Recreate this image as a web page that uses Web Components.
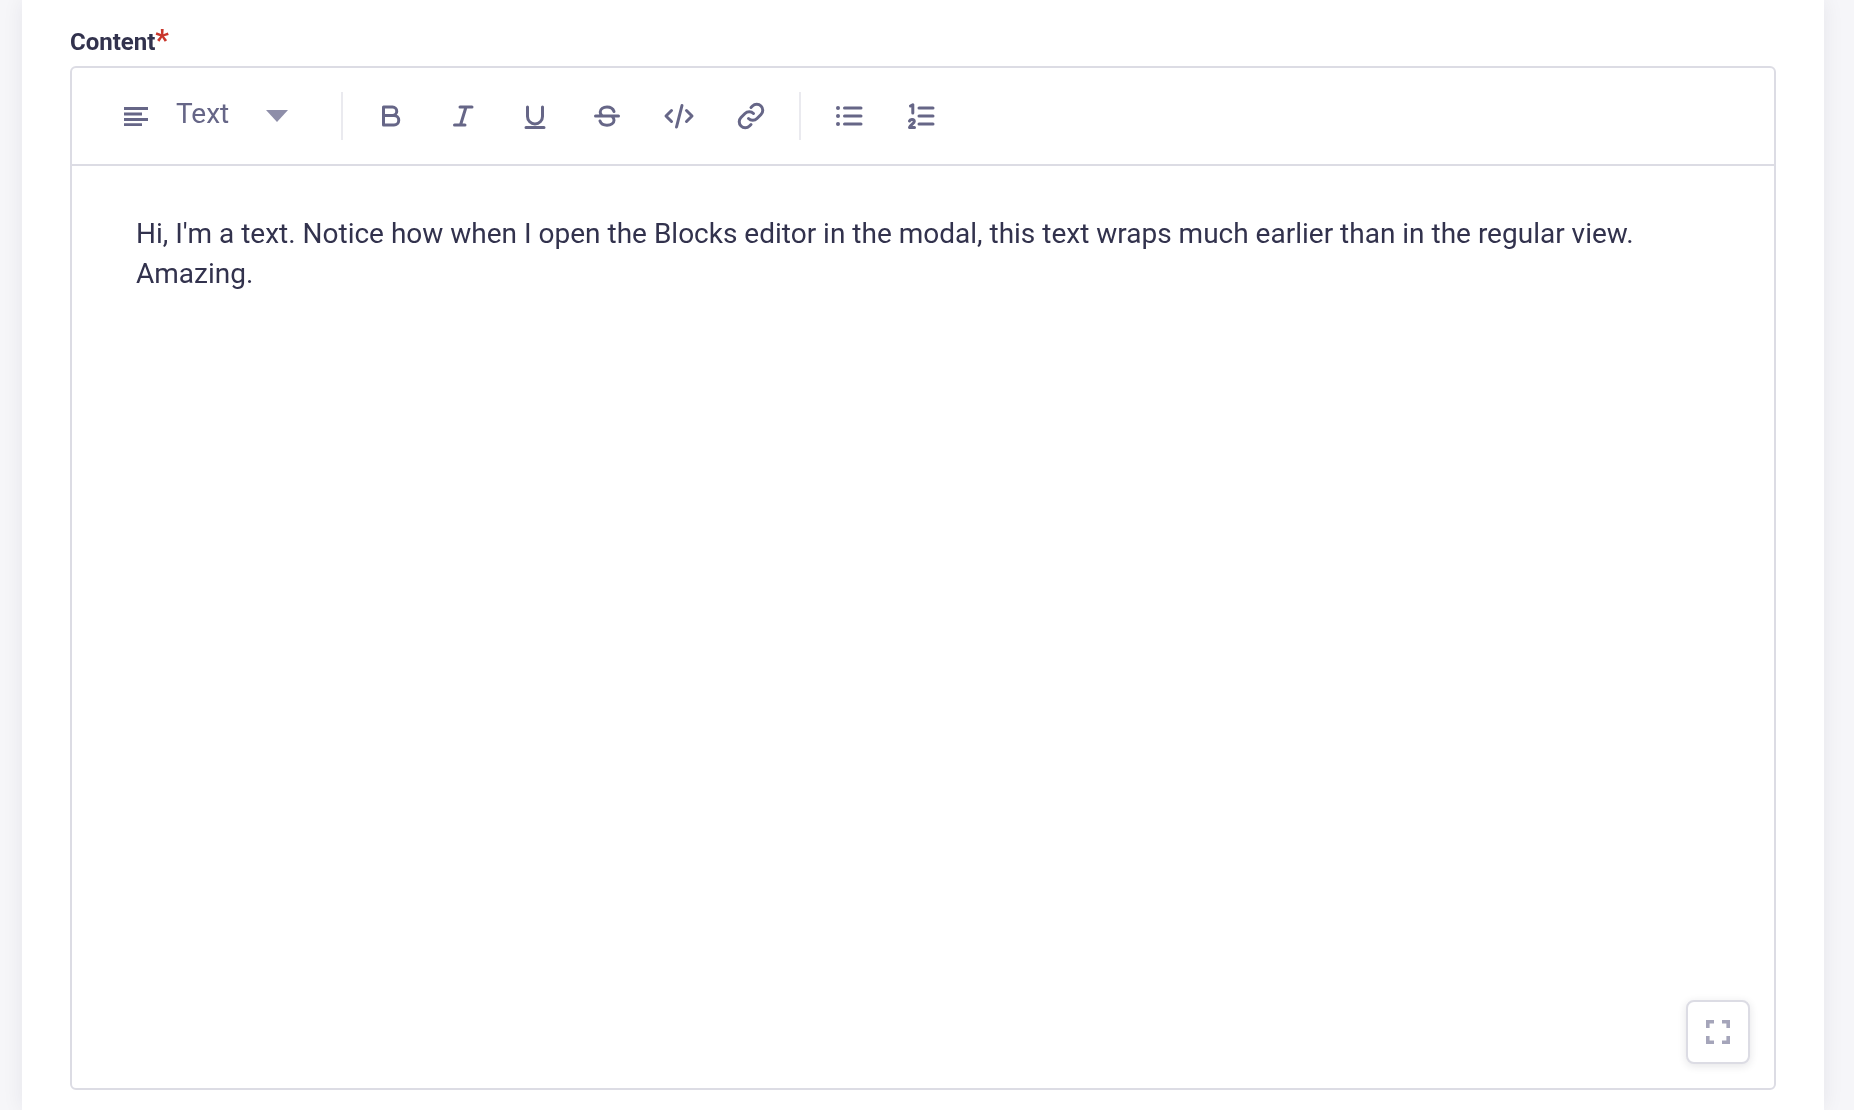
<!doctype html>
<html><head><meta charset="utf-8">
<style>
html,body{margin:0;height:100%;background:#f6f6f9;overflow:hidden}
body{font-family:Roboto,"Liberation Sans",sans-serif;color:#32324d}
</style></head><body>
<template id="t-page"><style>
:host{display:block;height:1110px;box-sizing:border-box;padding:0 30px 0 22px;filter:blur(.4px)}
.panel{height:100%;box-sizing:border-box;background:#fff;box-shadow:0 0 20px rgba(33,33,52,.07);padding:25px 48px 0}
</style><div class="panel"><slot></slot></div></template>

<template id="t-label"><style>
:host{display:block;height:41px;font-weight:700;font-size:24px;line-height:34px;color:#32324d}
.req{color:#c9362b;font-size:30px;line-height:20px}
</style><slot></slot><span class="req">*</span></template>

<template id="t-editor"><style>
:host{display:block;position:relative;height:1024px;box-sizing:border-box;border:2px solid #dcdce4;border-radius:6px;display:flex;flex-direction:column;background:#fff}
.fs{position:absolute;right:24px;bottom:24px}
.body{flex:1;box-sizing:border-box;padding:48px 64px 0 64px;font-size:28px;line-height:40px;color:#32324d}
</style><slot name="toolbar"></slot><div class="body"><slot></slot></div><div class="fs"><slot name="fs"></slot></div></template>

<template id="t-toolbar"><style>
:host{display:flex;align-items:center;height:98px;box-sizing:border-box;border-bottom:2px solid #dcdce4;padding-left:51px}
.sel{display:flex;align-items:center;width:218px;color:#666687;font-size:28px}
.sel .txt{margin-left:27px;width:89px;position:relative;top:-3px}
.group{display:flex;align-items:center;padding:0 12px 0 12px}
.sep{width:2px;height:48px;background:#eaeaef}
svg{display:block}
</style>
<div class="sel">
<svg width="26" height="20" viewBox="0 0 26 20" fill="none" stroke="#666687" stroke-width="3"><path d="M1 2.500H25M1 8H19M1 13.500H25M1 18.800H19"/></svg>
<span class="txt">Text</span>
<svg width="24" height="14" viewBox="0 0 24 14"><path d="M1 1H23L12 13Z" fill="#8e8ea9"/></svg>
</div>
<div class="sep"></div>
<div class="group"><slot name="a"></slot></div>
<div class="sep"></div>
<div class="group"><slot name="b"></slot></div>
</template>

<template id="t-btn"><style>
:host{display:flex;width:72px;height:48px;align-items:center;justify-content:center}
</style><slot></slot></template>

<template id="t-fs"><style>
:host{display:flex;width:64px;height:64px;box-sizing:border-box;align-items:center;justify-content:center;background:#fff;border:2px solid #dcdce4;border-radius:8px;box-shadow:0 2px 8px rgba(33,33,52,.12)}
</style><slot></slot></template>

<x-page>
<x-label>Content</x-label>
<x-editor>
<x-toolbar slot="toolbar">
<x-btn slot="a"><svg viewBox="0 0 30 30" style="width:30px;height:30px;fill:none;stroke:#666687;stroke-width:3;stroke-linecap:round;stroke-linejoin:round;display:block"><path d="M7.500 6V24H18a4.700 4.700 0 0 0 0-9.500H7.500M7.500 6H16.500a4.200 4.200 0 0 1 0 8.500"/></svg></x-btn>
<x-btn slot="a"><svg viewBox="0 0 30 30" style="width:30px;height:30px;fill:none;stroke:#666687;stroke-width:3;stroke-linecap:round;stroke-linejoin:round;display:block"><path d="M12 6H24M6.500 24H17M18 6L12.500 24"/></svg></x-btn>
<x-btn slot="a"><svg viewBox="0 0 30 30" style="width:30px;height:30px;fill:none;stroke:#666687;stroke-width:3;stroke-linecap:round;stroke-linejoin:round;display:block"><path d="M7.500 6V15.500a7.500 7.500 0 0 0 15 0V6M6 26.500H24"/></svg></x-btn>
<x-btn slot="a"><svg viewBox="0 0 30 30" style="width:30px;height:30px;fill:none;stroke:#666687;stroke-width:3;stroke-linecap:round;stroke-linejoin:round;display:block"><path d="M3.500 15H26.500M22 10.500c-1-3-3.700-4.500-7-4.500-3.800 0-6.800 2-6.800 5 0 1.500.6 2.700 1.700 3.500M20.500 16c1 .9 1.500 2 1.500 3.300 0 3-3 4.900-7 4.900-3.400 0-6-1.500-7-4.200"/></svg></x-btn>
<x-btn slot="a"><svg viewBox="0 0 32 30" style="width:32px;height:30px;fill:none;stroke:#666687;stroke-width:3;stroke-linecap:round;stroke-linejoin:round;display:block"><path d="M8.500 9.500L3 15L8.500 20.500M23.500 9.500L29 15L23.500 20.500M19 4.500L13.500 26"/></svg></x-btn>
<x-btn slot="a"><svg viewBox="0 0 30 30" style="width:30px;height:30px;fill:none;stroke:#666687;stroke-width:3;stroke-linecap:round;stroke-linejoin:round;display:block"><path d="M12.500 17.500a6 6 0 0 0 8.500 0l4-4a6 6 0 0 0-8.500-8.500l-1.500 1.500M17.500 12.500a6 6 0 0 0-8.500 0l-4 4a6 6 0 0 0 8.500 8.500l1.500-1.500"/></svg></x-btn>
<x-btn slot="b"><svg viewBox="0 0 30 30" style="width:30px;height:30px;fill:none;stroke:#666687;stroke-width:3;stroke-linecap:round;stroke-linejoin:round;display:block"><path d="M10.500 7H27M10.500 15H27M10.500 23H27"/><g fill="#666687" stroke="none"><circle cx="4" cy="7" r="2"/><circle cx="4" cy="15" r="2"/><circle cx="4" cy="23" r="2"/></g></svg></x-btn>
<x-btn slot="b"><svg viewBox="0 0 30 30" style="width:30px;height:30px;fill:none;stroke:#666687;stroke-width:3;stroke-linecap:round;stroke-linejoin:round;display:block"><path d="M13 7H27M13 15H27M13 23H27"/><path stroke-width="3" d="M4.500 5L6.800 3.800V12M3.500 20c.6-2 4.800-2 4.800.5 0 2-4 3.200-4.800 6H8.500"/></svg></x-btn>
</x-toolbar>
Hi, I'm a text. Notice how when I open the Blocks editor in the modal, this text wraps much earlier than in the regular view. Amazing.
<x-fs slot="fs"><svg width="24" height="24" viewBox="0 0 24 24" fill="none" stroke="#a5a5ba" stroke-width="3.600" style="display:block"><path d="M1.800 8V1.800H8M16 1.800H22.200V8M22.200 16V22.200H16M8 22.200H1.800V16"/></svg></x-fs>
</x-editor>
</x-page>
<script>
for (const [tag,id] of [['x-page','t-page'],['x-label','t-label'],['x-editor','t-editor'],['x-toolbar','t-toolbar'],['x-btn','t-btn'],['x-fs','t-fs']]) {
  customElements.define(tag, class extends HTMLElement {
    constructor(){super();this.attachShadow({mode:'open'}).appendChild(document.getElementById(id).content.cloneNode(true));}
  });
}
</script>
</body></html>
